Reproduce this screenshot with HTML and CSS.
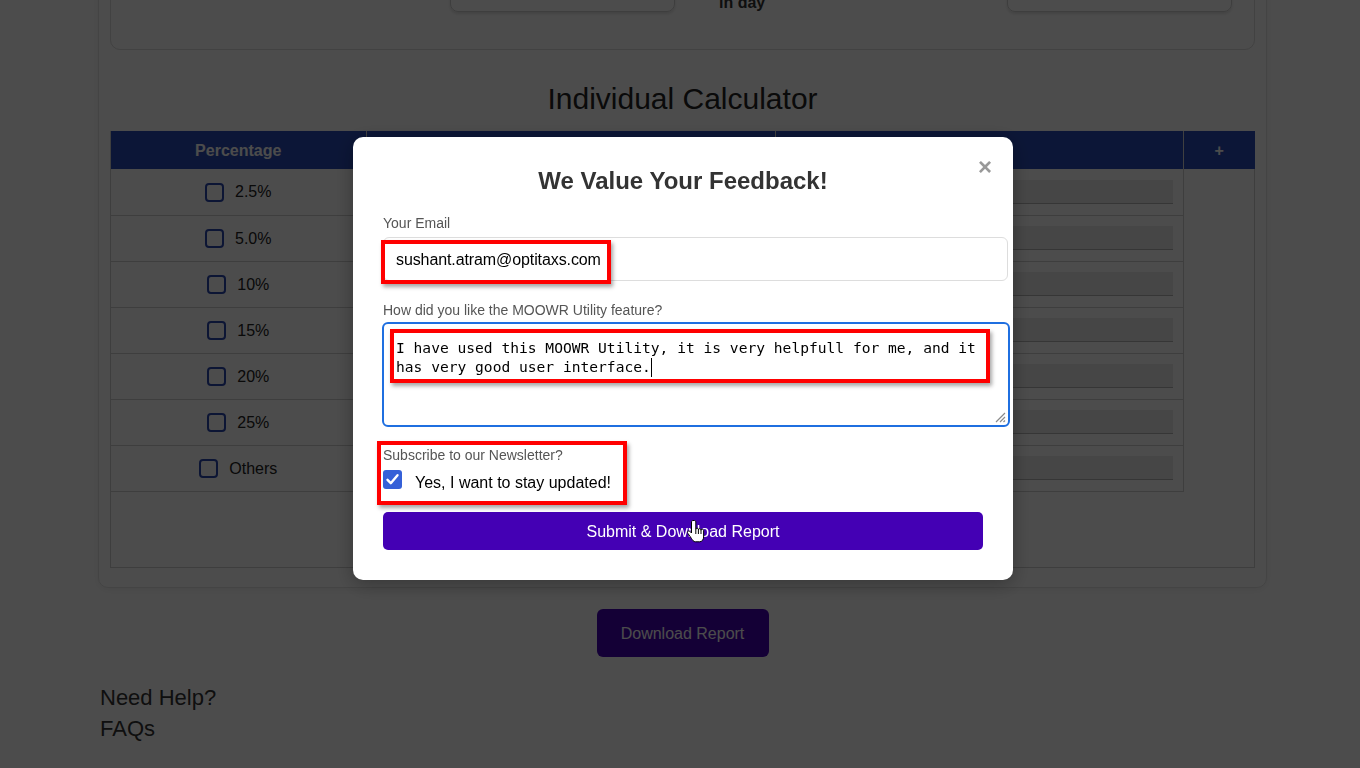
FILE: index.html
```html
<!DOCTYPE html>
<html lang="en">
<head>
<meta charset="utf-8">
<title>Individual Calculator - Feedback</title>
<link rel="stylesheet" href="styles.css">
</head>
<body>
<div class="page">
  <section class="card">
    <div class="top-card">
      <div class="tc-label"></div>
      <div class="tc-input"></div>
      <div class="tc-mid">Duration<br>in day</div>
      <div class="tc-input"></div>
    </div>
    <h2 class="calc-title">Individual Calculator</h2>
    <div class="table-wrap">
      <table class="calc-table">
        <colgroup>
          <col class="c1"><col class="c2"><col class="c3"><col class="c4">
        </colgroup>
        <thead>
          <tr><th>Percentage</th><th>Amount</th><th>Value</th><th>+</th></tr>
        </thead>
        <tbody>
          <tr><td><span class="pct"><span class="cb"></span>2.5%</span></td><td><span class="cell-input"></span></td><td><span class="cell-input"></span></td><td class="empty"></td></tr>
          <tr><td><span class="pct"><span class="cb"></span>5.0%</span></td><td><span class="cell-input"></span></td><td><span class="cell-input"></span></td><td class="empty"></td></tr>
          <tr><td><span class="pct"><span class="cb"></span>10%</span></td><td><span class="cell-input"></span></td><td><span class="cell-input"></span></td><td class="empty"></td></tr>
          <tr><td><span class="pct"><span class="cb"></span>15%</span></td><td><span class="cell-input"></span></td><td><span class="cell-input"></span></td><td class="empty"></td></tr>
          <tr><td><span class="pct"><span class="cb"></span>20%</span></td><td><span class="cell-input"></span></td><td><span class="cell-input"></span></td><td class="empty"></td></tr>
          <tr><td><span class="pct"><span class="cb"></span>25%</span></td><td><span class="cell-input"></span></td><td><span class="cell-input"></span></td><td class="empty"></td></tr>
          <tr><td><span class="pct"><span class="cb"></span>Others</span></td><td><span class="cell-input"></span></td><td><span class="cell-input"></span></td><td class="empty"></td></tr>
        </tbody>
      </table>
    </div>
  </section>
  <div class="dl-row"><button class="dl-btn">Download Report</button></div>
  <footer class="help">
    <div>Need Help?</div>
    <div>FAQs</div>
  </footer>
</div>

<div class="overlay">
  <div class="modal">
    <span class="close">&times;</span>
    <h2 class="modal-title">We Value Your Feedback!</h2>
    <label class="field-label">Your Email</label>
    <div class="email-input">sushant.atram@optitaxs.com</div>
    <label class="field-label ta-label">How did you like the MOOWR Utility feature?</label>
    <div class="textarea">I have used this MOOWR Utility, it is very helpfull for me, and it has very good user interface.<span class="caret"></span>
      <svg class="resize" width="11" height="11" viewBox="0 0 11 11"><path d="M10 1 L1 10 M10 5 L5 10 M10 8.5 L8.5 10" stroke="#8a8a8a" stroke-width="1.2"/></svg>
    </div>
    <div class="field-label sub-label">Subscribe to our Newsletter?</div>
    <div class="check-row">
      <span class="cbx"><svg width="19" height="19" viewBox="0 0 19 19"><path d="M4.5 9.8 L7.8 13.2 L14.5 5.2" fill="none" stroke="#fff" stroke-width="2.4" stroke-linecap="round" stroke-linejoin="round"/></svg></span>
      <span class="check-text">Yes, I want to stay updated!</span>
    </div>
    <button class="submit">Submit &amp; Download Report</button>

    <div class="annot annot-email"></div>
    <div class="annot annot-text"></div>
    <div class="annot annot-sub"></div>
    <svg class="hand" width="18" height="23" viewBox="0 0 18 23"><path d="M6 0.5 C5.2 0.5 4.5 1.2 4.5 2 V13 L3 11.5 C2.3 10.8 1.2 10.8 0.7 11.5 C0.3 12 0.4 12.8 0.9 13.4 L4.5 18.5 C5.5 20 6.5 21.8 8.5 21.8 H12.5 C15 21.8 16.6 19.6 16.6 17 V10.5 C16.6 9.7 16 9.2 15.3 9.2 C14.6 9.2 14 9.7 14 10.5 V10 C14 9.2 13.4 8.6 12.7 8.6 C12 8.6 11.4 9.2 11.4 10 V9.5 C11.4 8.7 10.8 8.1 10.1 8.1 C9.4 8.1 8.8 8.7 8.8 9.5 V2 C8.8 1.2 8 0.5 7.3 0.5 Z M8.8 9.5 V14 M11.4 10 V14 M14 10.5 V14" fill="#fff" stroke="#000" stroke-width="1" stroke-linejoin="round"/></svg>
  </div>
</div>
</body>
</html>
```

FILE: styles.css
```css
* { box-sizing: border-box; }

html, body {
  margin: 0;
  height: 100%;
  overflow: hidden;
}

body {
  font-family: "Liberation Sans", Arial, sans-serif;
  background: #fff;
  color: #333;
}

/* ---------- page behind the modal ---------- */
.page {
  width: 1169px;
  margin: -80px 0 0 98px;
}

.card {
  border: 1px solid #e4e4e4;
  border-radius: 10px;
  box-shadow: 0 2px 8px rgba(0, 0, 0, 0.06);
  padding: 12px 11px 19px;
}

.top-card {
  height: 117px;
  border: 1px solid #dcdcdc;
  border-radius: 10px;
  display: grid;
  grid-template-columns: 315px 225px 332px 225px;
  align-items: end;
  padding: 0 0 37px 24px;
}

.tc-input {
  height: 40px;
  border: 1px solid #d0d0d0;
  border-radius: 8px;
  box-shadow: 0 2px 3px rgba(0, 0, 0, 0.12);
}

.tc-mid {
  padding-left: 44px;
  font-size: 16px;
  line-height: 18px;
  font-weight: bold;
  color: #333;
}

.calc-title {
  margin: 31px 0 14px;
  text-align: center;
  font-size: 30px;
  line-height: 36px;
  font-weight: normal;
  color: #222;
}

.table-wrap {
  height: 437px;
  border: 1px solid #cfcfcf;
  border-top: 0;
}

.calc-table {
  width: 100%;
  border-collapse: collapse;
  table-layout: fixed;
}

.c1 { width: 255px; }
.c2 { width: 409px; }
.c3 { width: 408px; }
.c4 { width: 72px; }

.calc-table th {
  height: 38px;
  padding: 2px 0 0;
  background: #2a4cb8;
  color: #fff;
  font-size: 16px;
  font-weight: bold;
  border-left: 1px solid #d8d8d8;
}

.calc-table th:first-child { border-left: 0; }

.calc-table td {
  height: 46px;
  padding: 0;
  text-align: center;
  border-bottom: 1px solid #cfcfcf;
  border-right: 1px solid #cfcfcf;
}

.calc-table td.empty {
  border: 0;
}

.pct {
  display: flex;
  justify-content: center;
  align-items: center;
  gap: 11px;
  padding-top: 1px;
  font-size: 16px;
  line-height: 20px;
  color: #222;
}

.cb {
  width: 19px;
  height: 19px;
  border: 2px solid #2a48b0;
  border-radius: 4px;
}

.cell-input {
  display: block;
  height: 24px;
  margin: 0 10px;
  background: #ececec;
  border-bottom: 1px solid #b5b5b5;
}

.dl-row {
  margin-top: 21px;
  text-align: center;
}

.dl-btn {
  width: 172px;
  height: 48px;
  padding-top: 2px;
  border: 0;
  border-radius: 6px;
  background: #4400b4;
  color: #fff;
  font-family: "Liberation Sans", Arial, sans-serif;
  font-size: 16px;
}

.help {
  margin-top: 25px;
  padding-left: 2px;
  font-size: 22px;
  line-height: 31px;
  color: #333;
}

/* ---------- modal ---------- */
.overlay {
  position: fixed;
  inset: 0;
  background: rgba(0, 0, 0, 0.7);
  display: flex;
  justify-content: center;
  align-items: flex-start;
  padding: 137px 0 0 6px;
}

.modal {
  position: relative;
  width: 660px;
  padding: 30px;
  background: #fff;
  border-radius: 10px;
  box-shadow: 0 4px 20px rgba(0, 0, 0, 0.3);
}

.close {
  position: absolute;
  top: 18px;
  right: 21px;
  font-size: 24px;
  line-height: 24px;
  font-weight: bold;
  color: #999;
}

.modal-title {
  margin: 0 40px 20px;
  text-align: center;
  font-size: 24px;
  line-height: 28px;
  font-weight: bold;
  color: #333;
}

.field-label {
  display: block;
  font-size: 14px;
  line-height: 16px;
  color: #555;
  margin-bottom: 6px;
}

.email-input {
  width: 625px;
  height: 44px;
  padding: 2px 12px 0;
  border: 1px solid #ddd;
  border-radius: 6px;
  display: flex;
  align-items: center;
  font-size: 16px;
  letter-spacing: -0.1px;
  color: #000;
  margin-bottom: 21px;
}

.ta-label { margin-bottom: 4px; }

.textarea {
  position: relative;
  width: 628px;
  height: 105px;
  margin-left: -1px;
  padding: 14px 12px 0;
  border: 2px solid #1f6fe0;
  border-radius: 6px;
  font-family: "DejaVu Sans Mono", "Liberation Mono", monospace;
  font-size: 14.6px;
  line-height: 19px;
  color: #000;
}

.caret {
  display: inline-block;
  width: 1px;
  height: 19px;
  background: #000;
  vertical-align: -5px;
}

.resize {
  position: absolute;
  right: 2px;
  bottom: 2px;
}

.sub-label {
  margin-top: 20px;
  margin-bottom: 7px;
}

.check-row {
  display: flex;
  align-items: flex-start;
  height: 28px;
  margin-bottom: 14px;
}

.cbx {
  width: 19px;
  height: 19px;
  border-radius: 3px;
  background: #3560d8;
  display: flex;
}

.check-text {
  margin-left: 13px;
  font-size: 16px;
  line-height: 26px;
  color: #000;
}

.submit {
  display: block;
  width: 600px;
  height: 38px;
  padding-top: 3px;
  border: 0;
  border-radius: 5px;
  background: #4400b4;
  color: #fff;
  font-family: "Liberation Sans", Arial, sans-serif;
  font-size: 16px;
}

/* red annotation boxes drawn over the screenshot */
.annot {
  position: absolute;
  border: 4px solid #ff0000;
  box-shadow: 2px 3px 4px rgba(0, 0, 0, 0.35);
  pointer-events: none;
}

.annot-email { left: 28px; top: 103px; width: 230px; height: 44px; }
.annot-text  { left: 37px; top: 192px; width: 600px; height: 54px; }
.annot-sub   { left: 24px; top: 304px; width: 250px; height: 64px; }

.hand {
  position: absolute;
  left: 334px;
  top: 383px;
}
```
